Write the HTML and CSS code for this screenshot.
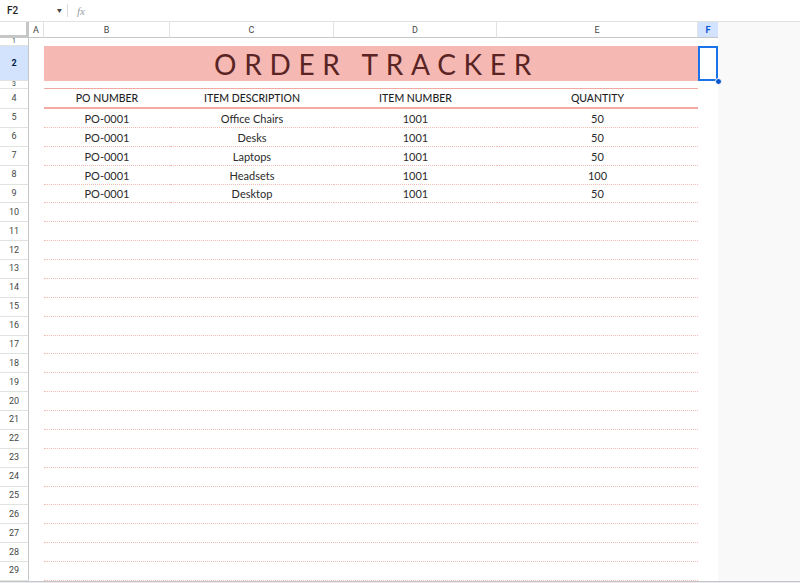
FILE: index.html
```html
<!DOCTYPE html>
<html lang="en">
<head>
<meta charset="utf-8">
<title>Order Tracker</title>
<link rel="stylesheet" href="styles.css">
</head>
<body>
<div class="fbar">
  <div class="namebox"><span class="ref">F2</span><span class="caret">&#9662;</span></div>
  <div class="divider"></div>
  <div class="fx">fx</div>
</div>
<div class="sheet">
  <div class="r hdr">
    <div class="corner"></div>
    <div class="ch">A</div><div class="ch">B</div><div class="ch">C</div><div class="ch">D</div><div class="ch">E</div><div class="ch on">F</div>
    <div class="gx"></div>
  </div>
  <div class="r h8"><div class="rh sm">1</div><div class="gap"></div><div class="gx"></div></div>
  <div class="r h35">
    <div class="rh on">2</div><div class="ca"></div>
    <div class="title">ORDER TRACKER</div>
    <div class="cf sel"><div class="selbox"></div><div class="handle"></div></div>
    <div class="gx"></div>
  </div>
  <div class="r h8"><div class="rh sm">3</div><div class="ca"></div><div class="line3"></div><div class="cf"></div><div class="gx"></div></div>
  <div class="r h20">
    <div class="rh">4</div><div class="ca"></div>
    <div class="th">PO NUMBER</div><div class="th">ITEM DESCRIPTION</div><div class="th">ITEM NUMBER</div><div class="th">QUANTITY</div>
    <div class="cf"></div><div class="gx"></div>
  </div>
  <div class="r d"><div class="rh">5</div><div class="ca"></div><div class="td">PO-0001</div><div class="td">Office Chairs</div><div class="td">1001</div><div class="td">50</div><div class="cf"></div><div class="gx"></div></div>
  <div class="r d"><div class="rh">6</div><div class="ca"></div><div class="td">PO-0001</div><div class="td">Desks</div><div class="td">1001</div><div class="td">50</div><div class="cf"></div><div class="gx"></div></div>
  <div class="r d"><div class="rh">7</div><div class="ca"></div><div class="td">PO-0001</div><div class="td">Laptops</div><div class="td">1001</div><div class="td">50</div><div class="cf"></div><div class="gx"></div></div>
  <div class="r d"><div class="rh">8</div><div class="ca"></div><div class="td">PO-0001</div><div class="td">Headsets</div><div class="td">1001</div><div class="td">100</div><div class="cf"></div><div class="gx"></div></div>
  <div class="r d"><div class="rh">9</div><div class="ca"></div><div class="td">PO-0001</div><div class="td">Desktop</div><div class="td">1001</div><div class="td">50</div><div class="cf"></div><div class="gx"></div></div>
  <div class="r d"><div class="rh">10</div><div class="ca"></div><div class="te"></div><div class="cf"></div><div class="gx"></div></div>
  <div class="r d"><div class="rh">11</div><div class="ca"></div><div class="te"></div><div class="cf"></div><div class="gx"></div></div>
  <div class="r d"><div class="rh">12</div><div class="ca"></div><div class="te"></div><div class="cf"></div><div class="gx"></div></div>
  <div class="r d"><div class="rh">13</div><div class="ca"></div><div class="te"></div><div class="cf"></div><div class="gx"></div></div>
  <div class="r d"><div class="rh">14</div><div class="ca"></div><div class="te"></div><div class="cf"></div><div class="gx"></div></div>
  <div class="r d"><div class="rh">15</div><div class="ca"></div><div class="te"></div><div class="cf"></div><div class="gx"></div></div>
  <div class="r d"><div class="rh">16</div><div class="ca"></div><div class="te"></div><div class="cf"></div><div class="gx"></div></div>
  <div class="r d"><div class="rh">17</div><div class="ca"></div><div class="te"></div><div class="cf"></div><div class="gx"></div></div>
  <div class="r d"><div class="rh">18</div><div class="ca"></div><div class="te"></div><div class="cf"></div><div class="gx"></div></div>
  <div class="r d"><div class="rh">19</div><div class="ca"></div><div class="te"></div><div class="cf"></div><div class="gx"></div></div>
  <div class="r d"><div class="rh">20</div><div class="ca"></div><div class="te"></div><div class="cf"></div><div class="gx"></div></div>
  <div class="r d"><div class="rh">21</div><div class="ca"></div><div class="te"></div><div class="cf"></div><div class="gx"></div></div>
  <div class="r d"><div class="rh">22</div><div class="ca"></div><div class="te"></div><div class="cf"></div><div class="gx"></div></div>
  <div class="r d"><div class="rh">23</div><div class="ca"></div><div class="te"></div><div class="cf"></div><div class="gx"></div></div>
  <div class="r d"><div class="rh">24</div><div class="ca"></div><div class="te"></div><div class="cf"></div><div class="gx"></div></div>
  <div class="r d"><div class="rh">25</div><div class="ca"></div><div class="te"></div><div class="cf"></div><div class="gx"></div></div>
  <div class="r d"><div class="rh">26</div><div class="ca"></div><div class="te"></div><div class="cf"></div><div class="gx"></div></div>
  <div class="r d"><div class="rh">27</div><div class="ca"></div><div class="te"></div><div class="cf"></div><div class="gx"></div></div>
  <div class="r d"><div class="rh">28</div><div class="ca"></div><div class="te"></div><div class="cf"></div><div class="gx"></div></div>
  <div class="r d"><div class="rh">29</div><div class="ca"></div><div class="te"></div><div class="cf"></div><div class="gx"></div></div>
  <div class="footer"></div>
</div>
</body>
</html>
```

FILE: styles.css
```css
* { box-sizing: border-box; }
html, body { margin: 0; padding: 0; }
body {
  width: 800px;
  height: 583px;
  overflow: hidden;
  background: #ffffff;
  font-family: Roboto, "Liberation Sans", sans-serif;
  color: #1f1f1f;
}

/* formula bar */
.fbar {
  height: 22px;
  display: flex;
  align-items: center;
  border-bottom: 1px solid #e1e3e1;
  background: #ffffff;
}
.namebox {
  width: 67px;
  display: flex;
  align-items: center;
  justify-content: space-between;
  padding: 0 6px 0 7px;
  font-size: 10px;
}
.ref { font-weight: 500; color: #1f1f1f; }
.caret { font-size: 8px; color: #444746; transform: scaleX(1.2); }
.divider {
  width: 1px;
  height: 13px;
  background: #dadce0;
}
.fx {
  margin-left: 9px;
  font-family: "Liberation Serif", serif;
  font-style: italic;
  font-size: 11px;
  color: #9aa0a6;
}

/* sheet grid */
.r {
  display: grid;
  grid-template-columns: 29px 15px 126px 164px 163px 201px 20px 1fr;
}
.hdr { height: 16px; }
.h8 { height: 8px; }
.h35 { height: 35px; }
.h20 { height: 20px; }
.d { height: 18.875px; }

.corner {
  border-right: 3px solid #c4c7c5;
  border-bottom: 3px solid #c4c7c5;
  background: #ffffff;
}
.ch {
  display: flex;
  align-items: center;
  justify-content: center;
  font-size: 9px;
  color: #444746;
  border-right: 1px solid #e1e3e1;
  border-bottom: 1px solid #c4c7c5;
  background: #ffffff;
}
.ch.on {
  background: #d3e3fd;
  color: #0b57d0;
  font-weight: 700;
  border-right: none;
}

.rh {
  display: flex;
  align-items: center;
  justify-content: center;
  font-size: 9px;
  line-height: 1;
  color: #444746;
  border-right: 1px solid #c4c7c5;
  border-bottom: 1px solid #e1e3e1;
  background: #ffffff;
}
.rh.sm {
  font-size: 7px;
  line-height: 7px;
}
.rh.on {
  background: #d3e3fd;
  color: #041e49;
  font-weight: 700;
}
.gap { grid-column: 2 / 8; }
.gx {
  background: #f8f9f8;
  grid-column: 8;
}

/* title row */
.title {
  grid-column: 3 / 7;
  background: #f5b8b2;
  color: #5a2424;
  font-family: Lato, "Noto Sans", sans-serif;
  font-size: 28px;
  letter-spacing: 7.7px;
  padding-left: 11px;
  display: flex;
  align-items: center;
  justify-content: center;
}
.cf { background: #ffffff; }
.sel { position: relative; }
.selbox {
  position: absolute;
  inset: 0;
  border: 2px solid #1a73e8;
}
.handle {
  position: absolute;
  right: -4px;
  bottom: -4px;
  width: 7px;
  height: 7px;
  border-radius: 50%;
  background: #0b57d0;
  border: 1px solid #ffffff;
  z-index: 2;
}

.line3 {
  grid-column: 3 / 7;
  border-bottom: 1px solid #f4aaa2;
}

/* table */
.th, .td {
  display: flex;
  align-items: center;
  justify-content: center;
  font-family: Lato, "Noto Sans", sans-serif;
  font-size: 11px;
  color: #2b2b2b;
  white-space: nowrap;
}
.th {
  font-size: 10.5px;
  font-weight: 500;
  color: #1f1f1f;
  border-bottom: 2px solid #f4aaa2;
  padding-bottom: 1px;
}
.td {
  border-bottom: 1px dotted #f6bab4;
  padding-top: 1px;
}
.te {
  grid-column: 3 / 7;
  border-bottom: 1px dotted #f6bab4;
}

.footer {
  height: 4px;
  background: #e8eaed;
  border-top: 1px solid #c4c7c5;
}
```
